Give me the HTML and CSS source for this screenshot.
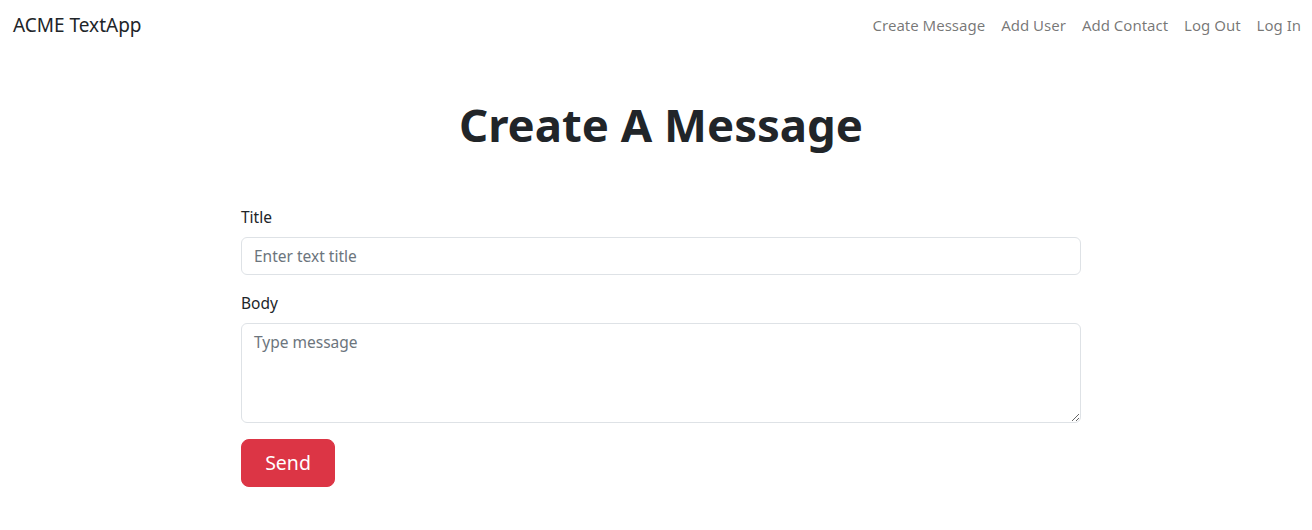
FILE: index.html
```html
<!DOCTYPE html>
<html lang="en">
<head>
<meta charset="utf-8">
<title>ACME TextApp</title>
<link rel="stylesheet" href="styles.css">
</head>
<body>
<nav class="navbar">
  <a class="brand" href="#">ACME TextApp</a>
  <ul class="nav-links">
    <li><a href="#">Create Message</a></li>
    <li><a href="#">Add User</a></li>
    <li><a href="#">Add Contact</a></li>
    <li><a href="#">Log Out</a></li>
    <li><a href="#">Log In</a></li>
  </ul>
</nav>
<main class="page">
  <h1 class="title">Create A Message</h1>
  <form class="form">
    <div class="field">
      <label class="label" for="title">Title</label>
      <input class="control" id="title" type="text" placeholder="Enter text title">
    </div>
    <div class="field">
      <label class="label" for="body">Body</label>
      <textarea class="control area" id="body" placeholder="Type message"></textarea>
    </div>
    <button class="btn-send" type="button">Send</button>
  </form>
</main>
</body>
</html>
```

FILE: styles.css
```css
* { box-sizing: border-box; }
html, body { margin: 0; padding: 0; background: #fff; }
body {
  font-family: "Segoe UI", "Noto Sans", sans-serif;
  font-size: 16px;
  line-height: 1.5;
  color: #212529;
}
.navbar {
  display: flex;
  align-items: center;
  justify-content: space-between;
  padding: 8px 3px 8px 13px;
  height: 50px;
}
.brand {
  font-size: 19px;
  color: #212529;
  text-decoration: none;
}
.nav-links {
  display: flex;
  list-style: none;
  margin: 0;
  padding: 0;
}
.nav-links a {
  display: block;
  padding: 8px;
  font-size: 15px;
  color: rgba(0,0,0,.55);
  text-decoration: none;
}
.page {
  display: flex;
  flex-direction: column;
  align-items: center;
  padding-left: 10px;
}
.title {
  margin: 47px 0 53px;
  font-size: 45.5px;
  font-weight: 700;
  line-height: 1.2;
  text-align: center;
}
.form {
  width: 840px;
}
.field { margin-bottom: 16px; }
.label {
  display: block;
  margin-bottom: 8px;
  font-size: 15.5px;
  line-height: 24px;
}
.control {
  display: block;
  width: 100%;
  height: 38px;
  padding: 6px 12px;
  font: inherit;
  font-size: 15.5px;
  line-height: 24px;
  color: #212529;
  border: 1px solid #dee2e6;
  border-radius: 6px;
  background: #fff;
}
.control::placeholder { color: #6c757d; opacity: 1; }
.area { height: 100px; resize: vertical; }
.btn-send {
  font: inherit;
  font-size: 19.5px;
  line-height: 1.5;
  color: #fff;
  background: #dc3545;
  border: 1px solid #dc3545;
  border-radius: 8px;
  padding: 8px 16px;
  width: 94px;
  height: 48px;
}
```
